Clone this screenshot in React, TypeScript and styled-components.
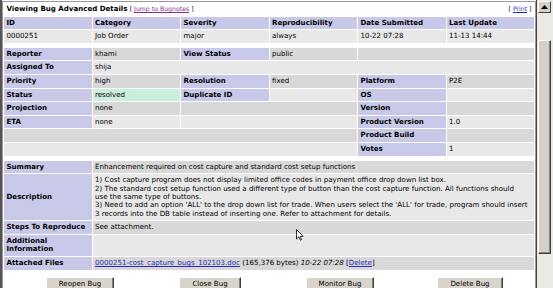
import styled, { createGlobalStyle } from 'styled-components'

const GlobalStyle = createGlobalStyle`
  html, body { margin: 0; padding: 0; background: #fff; }
  body {
    font-family: "DejaVu Sans", Verdana, sans-serif;
    font-size: 7.05px;
    color: #000;
  }
`

const Window = styled.div`
  position: relative;
  display: flex;
  width: 553px;
  height: 288px;
  overflow: hidden;
  box-sizing: border-box;
  border-left: 2px solid #555;
`

const Page = styled.div`
  flex: 1;
  min-width: 0;
  padding-top: 1px;
`

const Table = styled.div`
  display: flex;
  flex-direction: column;
  gap: 1px;
  padding: 1px;
  border: 1px solid #999;
  border-bottom: none;
`

const Row = styled.div<{ $tone?: 'dark' | 'light' | 'plain' }>`
  display: grid;
  grid-template-columns: repeat(6, minmax(0, 1fr));
  gap: 1px;
  --row-bg: ${p => (p.$tone === 'dark' ? '#d8d8d8' : p.$tone === 'plain' ? '#fff' : '#e8e8e8')};
`

const Cell = styled.div<{ $span?: number; $status?: boolean }>`
  grid-column: span ${p => p.$span ?? 1};
  display: flex;
  align-items: center;
  background: ${p => (p.$status ? '#cceedd' : 'var(--row-bg)')};
  padding: 2.1px 2.5px;
  line-height: 8.4px;
  min-height: 8.4px;
`

const Label = styled(Cell)`
  background: #c8c8e8;
  font-weight: bold;
`

const Text = styled.div`
  display: block;
`

const TitleRow = styled.div`
  display: flex;
  justify-content: space-between;
  align-items: center;
  padding: 2.1px 2.5px;
  line-height: 8.4px;
`

const Title = styled.span`
  font-weight: bold;
`

const Small = styled.span`
  font-size: 6.2px;
  font-weight: normal;
`

const Link = styled.a<{ $visited?: boolean }>`
  color: ${p => (p.$visited ? '#8a2f8a' : '#2a2ab8')};
  text-decoration: underline;
`

const Spacer = styled.div`
  height: 3px;
`

const Buttons = styled.div`
  display: grid;
  grid-template-columns: repeat(4, 130px);
  padding: 6px 0 0 11px;
  justify-items: center;
`

const Button = styled.button`
  font-family: "DejaVu Sans", Verdana, sans-serif;
  font-size: 7.05px;
  color: #000;
  background: #d8d4cc;
  padding: 2px 12px;
  line-height: 8px;
  border: 1px solid;
  border-color: #fff #404040 #404040 #fff;
  box-shadow: inset -1px -1px 0 #808080;
`

const Scrollbar = styled.div`
  flex: none;
  width: 17px;
  display: flex;
  flex-direction: column;
  align-items: center;
  background: #ebe9e4;
  border-left: 1px solid #444;
  box-sizing: border-box;
  padding: 1px 2px 0 1px;
`

const Arrow = styled.div`
  width: 13px;
  height: 12px;
  display: flex;
  align-items: center;
  justify-content: center;
  background: #d4d0c8;
  border: 1px solid;
  border-color: #fff #404040 #404040 #fff;
  box-sizing: border-box;
`

const Thumb = styled.div`
  margin-top: 27px;
  width: 11px;
  height: 212px;
  background: #d4d0c8;
  border: 1px solid;
  border-color: #fff #404040 #404040 #fff;
  box-shadow: inset -1px -1px 0 #808080;
`

const Cursor = styled.svg`
  position: absolute;
  left: 294px;
  top: 229px;
`

export default function App() {
  return (
    <Window>
      <GlobalStyle />
      <Page>
        <Table>
          <TitleRow>
            <span>
              <Title>Viewing Bug Advanced Details</Title>{' '}
              <Small>[ <Link $visited href="#bugnotes">Jump to Bugnotes</Link> ]</Small>
            </span>
            <Small>[ <Link href="#print">Print</Link> ]</Small>
          </TitleRow>

          <Row>
            <Label>ID</Label>
            <Label>Category</Label>
            <Label>Severity</Label>
            <Label>Reproducibility</Label>
            <Label>Date Submitted</Label>
            <Label>Last Update</Label>
          </Row>
          <Row $tone="light">
            <Cell>0000251</Cell>
            <Cell>Job Order</Cell>
            <Cell>major</Cell>
            <Cell>always</Cell>
            <Cell>10-22 07:28</Cell>
            <Cell>11-13 14:44</Cell>
          </Row>
          <Spacer />

          <Row $tone="dark">
            <Label>Reporter</Label>
            <Cell>khami</Cell>
            <Label>View Status</Label>
            <Cell>public</Cell>
            <Cell $span={2} />
          </Row>
          <Row $tone="light">
            <Label>Assigned To</Label>
            <Cell $span={5}>shija</Cell>
          </Row>
          <Row $tone="dark">
            <Label>Priority</Label>
            <Cell>high</Cell>
            <Label>Resolution</Label>
            <Cell>fixed</Cell>
            <Label>Platform</Label>
            <Cell>P2E</Cell>
          </Row>
          <Row $tone="light">
            <Label>Status</Label>
            <Cell $status>resolved</Cell>
            <Label>Duplicate ID</Label>
            <Cell />
            <Label>OS</Label>
            <Cell />
          </Row>
          <Row $tone="dark">
            <Label>Projection</Label>
            <Cell>none</Cell>
            <Cell $span={2} />
            <Label>Version</Label>
            <Cell />
          </Row>
          <Row $tone="light">
            <Label>ETA</Label>
            <Cell>none</Cell>
            <Cell $span={2} />
            <Label>Product Version</Label>
            <Cell>1.0</Cell>
          </Row>
          <Row $tone="dark">
            <Cell $span={4} />
            <Label>Product Build</Label>
            <Cell />
          </Row>
          <Row $tone="light">
            <Cell $span={4} />
            <Label>Votes</Label>
            <Cell>1</Cell>
          </Row>
          <Spacer />

          <Row $tone="dark">
            <Label>Summary</Label>
            <Cell $span={5}>Enhancement required on cost capture and standard cost setup functions</Cell>
          </Row>
          <Row $tone="light">
            <Label>Description</Label>
            <Cell $span={5}>
              <Text>
                1) Cost capture program does not display limited office codes in payment office drop down list box.
                <br />
                2) The standard cost setup function used a different type of button than the cost capture function. All functions should
                <br />
                use the same type of buttons.
                <br />
                3) Need to add an option 'ALL' to the drop down list for trade. When users select the 'ALL' for trade, program should insert 3 records into the DB table instead of inserting one. Refer to attachment for details.
              </Text>
            </Cell>
          </Row>
          <Row $tone="dark">
            <Label>Steps To Reproduce</Label>
            <Cell $span={5}>See attachment.</Cell>
          </Row>
          <Row $tone="light">
            <Label>Additional Information</Label>
            <Cell $span={5} />
          </Row>
          <Row $tone="dark">
            <Label>Attached Files</Label>
            <Cell $span={5}>
              <Text>
                <Link href="#file">0000251-cost_capture_bugs_102103.doc</Link> (165,376 bytes) <i>10-22 07:28</i> [<Link href="#delete">Delete</Link>]
              </Text>
            </Cell>
          </Row>

          <Buttons>
            <Button>Reopen Bug</Button>
            <Button>Close Bug</Button>
            <Button>Monitor Bug</Button>
            <Button>Delete Bug</Button>
          </Buttons>
        </Table>
      </Page>

      <Scrollbar>
        <Arrow>
          <svg width="7" height="4" viewBox="0 0 7 4">
            <path d="M0 4 L3.5 0 L7 4 Z" fill="#000" />
          </svg>
        </Arrow>
        <Thumb />
      </Scrollbar>

      <Cursor width="8" height="12" viewBox="0 0 8 12">
        <path d="M0.5 0.5 L0.5 10 L2.8 7.8 L4.3 11.2 L5.6 10.6 L4.1 7.3 L7.2 7.3 Z" fill="#fff" stroke="#000" strokeWidth="0.8" />
      </Cursor>
    </Window>
  )
}
